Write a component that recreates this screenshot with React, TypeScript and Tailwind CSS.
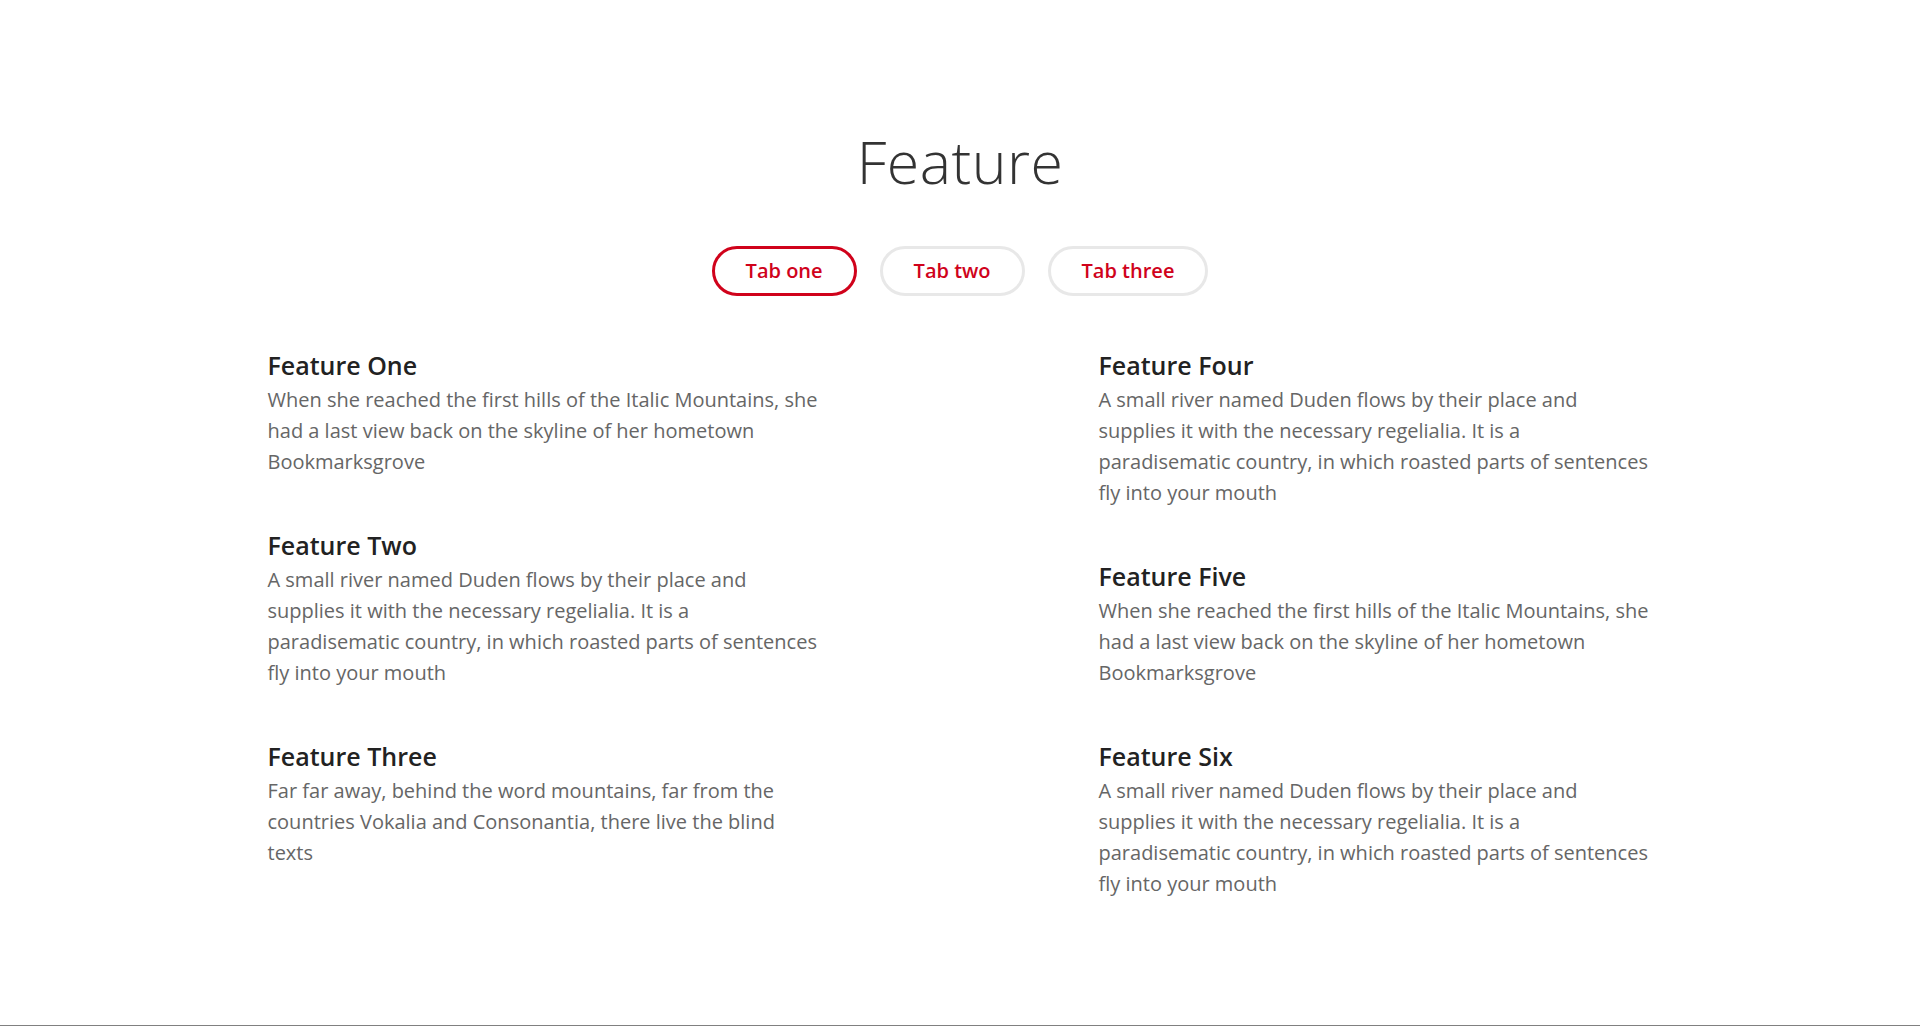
import { useState } from 'react';

const left = [
  {
    title: 'Feature One',
    text: 'When she reached the first hills of the Italic Mountains, she had a last view back on the skyline of her hometown Bookmarksgrove',
  },
  {
    title: 'Feature Two',
    text: 'A small river named Duden flows by their place and supplies it with the necessary regelialia. It is a paradisematic country, in which roasted parts of sentences fly into your mouth',
  },
  {
    title: 'Feature Three',
    text: 'Far far away, behind the word mountains, far from the countries Vokalia and Consonantia, there live the blind texts',
  },
];

const right = [
  {
    title: 'Feature Four',
    text: 'A small river named Duden flows by their place and supplies it with the necessary regelialia. It is a paradisematic country, in which roasted parts of sentences fly into your mouth',
  },
  {
    title: 'Feature Five',
    text: 'When she reached the first hills of the Italic Mountains, she had a last view back on the skyline of her hometown Bookmarksgrove',
  },
  {
    title: 'Feature Six',
    text: 'A small river named Duden flows by their place and supplies it with the necessary regelialia. It is a paradisematic country, in which roasted parts of sentences fly into your mouth',
  },
];

const tabs = ['Tab one', 'Tab two', 'Tab three'];

function FeatureItem({ title, text }: { title: string; text: string }) {
  return (
    <div className="w-[554px]">
      <h3 className="text-[25px] leading-[30px] font-semibold text-[#222]">{title}</h3>
      <p className="mt-[4px] text-[20px] leading-[31px] text-[#666]">{text}</p>
    </div>
  );
}

export default function App() {
  const [active, setActive] = useState(0);

  return (
    <div className="bg-white" style={{ fontFamily: '"Open Sans", sans-serif' }}>
      <section className="h-[1025px] pt-[126px]">
        <h2 className="text-center text-[59px] leading-[70px] font-light text-[#333] tracking-[0.5px]">
          Feature
        </h2>
        <div className="mt-[50px] flex justify-center gap-[23px]">
          {tabs.map((t, i) => (
            <button
              key={t}
              onClick={() => setActive(i)}
              className={`h-[50px] rounded-full border-[3px] px-[31px] text-[20px] font-semibold text-[#d0021b] ${
                active === i ? 'border-[#d0021b]' : 'border-[#e8e8e8]'
              }`}
            >
              {t}
            </button>
          ))}
        </div>
        <div className="mx-auto mt-[54px] flex w-[1385px] justify-between">
          <div className="flex flex-col gap-[53px]">
            {left.map((f) => (
              <FeatureItem key={f.title} {...f} />
            ))}
          </div>
          <div className="flex flex-col gap-[53px]">
            {right.map((f) => (
              <FeatureItem key={f.title} {...f} />
            ))}
          </div>
        </div>
      </section>
      <div className="h-px bg-[#808080]" />
    </div>
  );
}
